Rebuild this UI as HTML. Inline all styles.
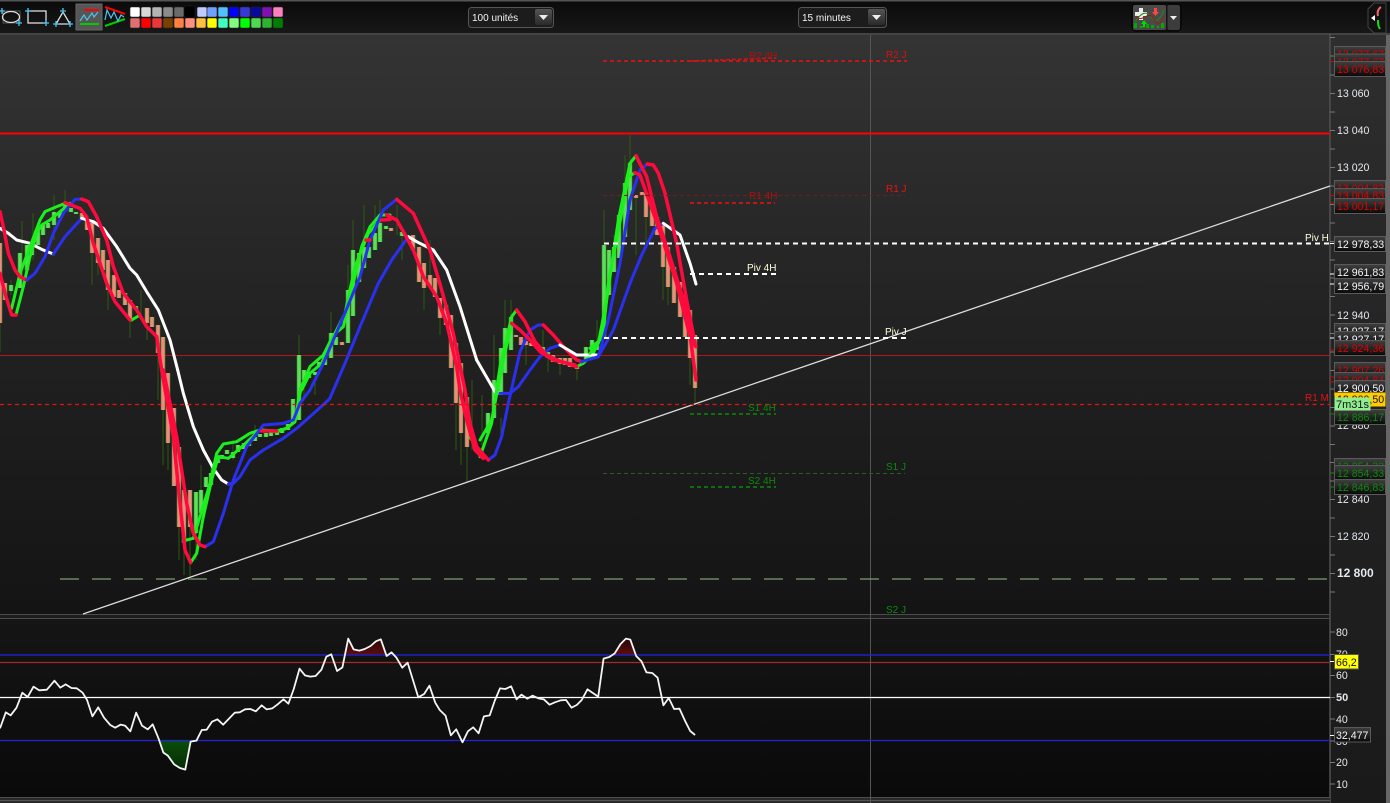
<!DOCTYPE html>
<html><head><meta charset="utf-8"><style>
html,body{margin:0;padding:0;background:#111;width:1390px;height:803px;overflow:hidden}
svg{display:block;font-family:"Liberation Sans",sans-serif}
text{font-size:10.6px}
.ax{fill:#e4e8ee}
.r{fill:#e00000}.g{fill:#0c8a0c}.w{fill:#f2f4f8}
.lb{fill:url(#lbl);stroke:#5a5a5a;stroke-width:1}
.c{fill:none;stroke-linejoin:round;stroke-linecap:round;stroke-width:9}
.R{stroke:#ff0a3c;stroke-width:10.5}.G{stroke:#1cf01c}.B{stroke:#2a30f0}.W{stroke:#fff}
.t{font-size:10px}
</style></head><body>
<svg width="1390" height="803" viewBox="0 0 1390 803" xmlns="http://www.w3.org/2000/svg">
<defs>
<linearGradient id="bg" x1="0" y1="0" x2="0" y2="1"><stop offset="0" stop-color="#343434"/><stop offset=".5" stop-color="#222"/><stop offset="1" stop-color="#141414"/></linearGradient>
<linearGradient id="axb" x1="0" y1="0" x2="0" y2="1"><stop offset="0" stop-color="#2e2e2e"/><stop offset=".5" stop-color="#222"/><stop offset="1" stop-color="#1a1a1a"/></linearGradient>
<linearGradient id="rsi" x1="0" y1="0" x2="0" y2="1"><stop offset="0" stop-color="#151515"/><stop offset="1" stop-color="#0a0a0a"/></linearGradient>
<linearGradient id="top" x1="0" y1="0" x2="0" y2="1"><stop offset="0" stop-color="#0a0a0a"/><stop offset="1" stop-color="#181818"/></linearGradient>
<linearGradient id="lbl" x1="0" y1="0" x2="0" y2="1"><stop offset="0" stop-color="#404040"/><stop offset="1" stop-color="#080808"/></linearGradient>
<linearGradient id="btn" x1="0" y1="0" x2="0" y2="1"><stop offset="0" stop-color="#555"/><stop offset="1" stop-color="#2a2a2a"/></linearGradient>
<linearGradient id="gf" x1="0" y1="0" x2="0" y2="1"><stop offset="0" stop-color="#0a4f0a"/><stop offset="1" stop-color="#062a06"/></linearGradient>
<linearGradient id="rf" x1="0" y1="0" x2="0" y2="1"><stop offset="0" stop-color="#2a0606"/><stop offset="1" stop-color="#5a0e0e"/></linearGradient>
<path id="gb" d="M11 285V291M20 253V288M27 245V270M32 245V255M38 230V245M43 225V235M48 223V228M54 212V225M60 212V218M65 205V208M71 208V212M76 212V214M136 306V310M196 492V533M201 490V513M206 477V487M211 473V485M218 457V463M222 455V459M227 450V454M233 452V458M238 445V452M244 443V449M249 440V446M255 437V441M260 434V437M266 433V437M271 432V436M277 431V435M282 428V433M288 424V430M293 399V424M299 355V420M304 370V380M309 373V378M315 372V375M319 362V367M325 352V365M331 333V358M336 337V345M348 290V343M353 250V316M359 253V282M364 247V268M369 247V258M375 233V250M380 223V242M386 226V229M402 232V236M488 413V433M494 380V418M501 348V395M505 328V373M511 317V350M543 347V352M548 352V358M586 347V360M592 340V353M597 342V350M604 245V337M609 250V295M614 247V272M619 215V258M625 183V237M630 163V210"/>
<path id="rb" d="M0 243V323M5 283V300M82 213V220M87 220V230M92 223V253M98 238V263M103 250V270M108 260V290M114 275V297M119 290V298M125 293V305M130 300V320M147 308V323M152 317V327M158 325V353M163 337V410M168 373V443M174 408V486M179 447V527M184 490V543M190 490V527M342 342V345M391 228V231M413 235V250M419 247V282M424 263V288M430 275V287M435 278V297M440 298V318M446 305V325M451 315V368M456 343V403M461 363V433M467 397V447M516 335V337M521 337V345M526 341V345M531 343V346M553 355V362M560 358V364M565 358V365M570 358V367M577 365V369M636 195V198M642 192V195M646 193V217M652 203V226M657 217V235M663 223V267M668 247V287M674 267V303M680 282V317M685 295V337M690 310V358M695 335V388"/>
</defs>

<!-- backgrounds -->
<rect width="1390" height="803" fill="#1c1c1c"/>
<rect x="0" y="35" width="1330" height="579" fill="url(#bg)"/>
<rect x="1331" y="35" width="55" height="768" fill="url(#axb)"/>
<rect x="1386" y="34" width="4" height="769" fill="#666"/>
<rect x="0" y="619" width="1330" height="178" fill="url(#rsi)"/>
<rect width="1390" height="34" fill="url(#top)"/>
<rect width="1390" height="1.5" fill="#555"/>
<rect y="33" width="1390" height="2" fill="#444"/>
<path d="M1330 34V803" stroke="#555" stroke-width="1.4" fill="none"/>
<path d="M0 614.5H1330M0 618.5H1330M0 797.5H1330" stroke="#4c4c4c" fill="none"/>
<rect y="798" width="1330" height="5" fill="#2a2a2a"/><path d="M0 800.5H1330" stroke="#555"/>

<!-- toolbar icons -->
<g fill="none">
<rect x="3" y="11" width="17" height="12" stroke="#555"/><ellipse cx="11" cy="17" rx="8.5" ry="5.5" stroke="#ddd" stroke-width="1.3"/>
<path d="M2 8V14M-1 11H5M19 20V26M16 23H22" stroke="#4cc4f0" stroke-width="1.3"/>
<rect x="28" y="11" width="18" height="12" stroke="#ddd" stroke-width="1.3"/>
<path d="M28 8V14M25 11H31M46 20V26M43 23H49" stroke="#4cc4f0" stroke-width="1.3"/>
<path d="M63 12L56 24H70Z" stroke="#ddd" stroke-width="1.3"/>
<path d="M63 8V14M60 11H66M56 21V27M53 24H59M70 21V27M67 24H73" stroke="#4cc4f0" stroke-width="1.3"/>
<rect x="76" y="4" width="26" height="26" fill="#565656" stroke="#666"/>
<path d="M84 10H99" stroke="#f00" stroke-width="2"/><path d="M80 24H99" stroke="#0c0" stroke-width="2"/>
<path d="M80 21L84 15L87 20L92 13L94 17L98 12" stroke="#4cc4f0" stroke-width="1.2"/>
<path d="M105 7L125 14" stroke="#f00" stroke-width="2"/><path d="M105 26L125 19" stroke="#0c0" stroke-width="2"/>
<path d="M105 20L107 10L111 18L114 12L118 21L121 15L124 17" stroke="#4cc4f0" stroke-width="1.2"/>
</g>
<!-- swatches -->
<g stroke="#222" stroke-width=".6">
<rect x="130" y="7" width="10" height="10" rx="1.5" fill="#fff"/><rect x="141" y="7" width="10" height="10" rx="1.5" fill="#d8d8d8"/><rect x="152" y="7" width="10" height="10" rx="1.5" fill="#b4b4b4"/><rect x="163" y="7" width="10" height="10" rx="1.5" fill="#8c8c8c"/><rect x="174" y="7" width="10" height="10" rx="1.5" fill="#6a6a6a"/><rect x="184" y="6" width="11" height="12" rx="1.5" fill="#000"/><rect x="197" y="7" width="10" height="10" rx="1.5" fill="#c0ccff"/><rect x="207" y="7" width="10" height="10" rx="1.5" fill="#70a0ff"/><rect x="218" y="7" width="10" height="10" rx="1.5" fill="#50c0ff"/><rect x="229" y="7" width="10" height="10" rx="1.5" fill="#0000ff"/><rect x="240" y="7" width="10" height="10" rx="1.5" fill="#3838d8"/><rect x="251" y="7" width="10" height="10" rx="1.5" fill="#0808a0"/><rect x="262" y="7" width="10" height="10" rx="1.5" fill="#8010b0"/><rect x="273" y="7" width="10" height="10" rx="1.5" fill="#ff80c0"/>
<rect x="130" y="18" width="10" height="10" rx="1.5" fill="#e07070"/><rect x="141" y="18" width="10" height="10" rx="1.5" fill="#f00"/><rect x="152" y="18" width="10" height="10" rx="1.5" fill="#e83838"/><rect x="163" y="18" width="10" height="10" rx="1.5" fill="#7a4000"/><rect x="174" y="18" width="10" height="10" rx="1.5" fill="#ff8040"/><rect x="185" y="18" width="10" height="10" rx="1.5" fill="#ff9080"/><rect x="196" y="18" width="10" height="10" rx="1.5" fill="#ffc040"/><rect x="207" y="18" width="10" height="10" rx="1.5" fill="#ff0"/><rect x="218" y="18" width="10" height="10" rx="1.5" fill="#40ffc0"/><rect x="229" y="18" width="10" height="10" rx="1.5" fill="#80ff80"/><rect x="240" y="18" width="10" height="10" rx="1.5" fill="#0f0"/><rect x="251" y="18" width="10" height="10" rx="1.5" fill="#50d850"/><rect x="262" y="18" width="10" height="10" rx="1.5" fill="#30b030"/><rect x="273" y="18" width="10" height="10" rx="1.5" fill="#008000"/>
</g>
<!-- dropdowns -->
<rect x="468.500" y="7.500" width="85" height="20" rx="3" fill="#1c1c1c" stroke="#555"/>
<rect x="535" y="9" width="17" height="16" rx="2" fill="url(#btn)"/><path d="M539 15H548L543.500 20Z" fill="#eee"/>
<text x="472" y="21" class="w" style="font-size:10px">100 unités</text>
<rect x="798.500" y="7.500" width="88" height="20" rx="3" fill="#1c1c1c" stroke="#555"/>
<rect x="868" y="9" width="17" height="16" rx="2" fill="url(#btn)"/><path d="M872 15H881L876.500 20Z" fill="#eee"/>
<text x="802" y="21" class="w" style="font-size:10px">15 minutes</text>
<!-- right tool button -->
<rect x="1132" y="4" width="49" height="27" rx="4" fill="#151515" stroke="#000"/>
<rect x="1133" y="5" width="33" height="25" rx="2" fill="#4a4a4a"/><rect x="1167.500" y="5" width="12.500" height="25" rx="2" fill="#3c3c3c"/>
<path d="M1170 16H1177L1173.500 20Z" fill="#eee"/>
<path d="M1139 8H1143V12H1147V16H1143V20H1139V16H1135V12H1139Z" fill="#eee"/>
<path d="M1154 8h3v4h2l-3.500 4l-3.500-4h2Z" fill="#f44"/><path d="M1144 20l3 4h-2v3h-2v-3h-2Z" fill="#0d0"/>
<path d="M1135 22C1140 14 1146 10 1150 16S1158 24 1164 10" fill="none" stroke="#1a8a1a"/><path d="M1136 16C1142 24 1148 10 1153 18S1160 26 1164 16" fill="none" stroke="#a01818"/>
<path d="M1134 28v-5h3v5zM1140 28v-2h3v2zM1146 28v-4h3v4zM1151 28v-3h3v3zM1157 28v-2h2v2zM1161 28v-5h3v5z" fill="#0a0"/>
<!-- hexagon top right -->
<path d="M1374 3H1386V33H1374L1368 27V9Z" fill="#111" stroke="#444"/>
<path d="M1371 18l4-3v6Z" fill="#fff"/><path d="M1381 7c-3 2-4 5-3 9" fill="none" stroke="#e66" stroke-width="2"/><path d="M1378 20c0 4 0 6 2 9" fill="none" stroke="#1d1" stroke-width="2"/>

<!-- crosshair & horizontal lines -->
<path d="M870.500 35V803" stroke="#555" fill="none"/>
<path d="M0 355.500H1330" stroke="#b01818" fill="none"/>
<path d="M60 579H1330" stroke="#7f9f78" stroke-width="1.2" stroke-dasharray="19 13" fill="none"/>
<path d="M0 133.500H1330" stroke="#ff0000" stroke-width="2" fill="none"/>

<!-- candles -->
<path d="M0 323V352M11 280V295M22 221V290M33 213V260M54 195V240M65 190V212M92 253V285M98 263V275M108 290V310M130 320V338M141 290V320M147 323V340M158 353V400M163 410V465M168 443V470M179 527V560M184 543V575M190 527V580M196 533V560M201 465V490M211 465V473M233 440V460M255 425V437M299 335V355M304 380V400M315 375V395M331 312V333M348 265V290M353 220V250M364 205V247M375 205V233M380 200V223M397 205V235M402 232V260M424 288V310M430 240V275M440 318V335M467 447V482M461 433V465M456 403V450M472 380V450M482 395V445M494 335V380M501 418V440M505 328V300M511 300V317M526 345V365M543 330V347M548 358V372M560 364V375M577 369V380M597 320V340M604 210V245M614 235V247M625 155V183M630 135V163M636 198V255M646 217V245M663 267V300M668 287V305M695 388V405M690 358V385" stroke="#2d5a12" fill="none"/>
<g fill="none" stroke-width="4.600" stroke="#3f8a2c"><use href="#gb"/><use href="#rb"/></g>
<g fill="none" stroke-width="3.400"><use href="#gb" stroke="#5ce05c"/><use href="#rb" stroke="#f08a7c"/></g>

<!-- MA curves -->
<g transform="translate(0,180) scale(.33333)">
<polyline class="c W" points="0,145 25,160 50,180 90,190 125,208 160,222"/>
<polyline class="c B" points="160,222 195,170 245,115"/>
<polyline class="c W" points="245,115 280,125 310,145 350,200 390,265 410,285 440,335 475,390 510,480 533,570"/>
<polyline class="c G" points="48,405 70,320 90,230 110,160 125,135 150,120 180,95 210,70"/>
<polyline class="c G" points="35,385 60,280 90,200 120,120 135,95 165,82 195,70"/>
<polyline class="c G" points="395,420 420,405"/>
<polyline class="c R" points="0,95 12,150 25,220 45,270 60,290 80,300"/>
<polyline class="c B" points="80,300 105,280 135,230 160,160 190,100 225,58 245,57"/>
<polyline class="c R" points="245,57 265,65 290,110 320,180 340,260 370,340 410,390 440,440 470,470 485,570"/>
<polyline class="c R" points="0,280 15,340 35,405 48,405"/>
<polyline class="c R" points="195,68 240,85 260,110 280,190 320,310 345,365 390,420"/>
</g>
<g transform="translate(150,370) scale(.33333)">
<polyline class="c W" points="83,0 100,70 130,170 160,240 190,295 215,330 235,342"/>
<polyline class="c B" points="235,342 250,340 270,320 300,270 340,240 400,205 440,175 480,140 530,95 540,85"/>
<polyline class="c G" points="122,578 140,550 160,440 185,330 205,260 235,265 270,235 330,180 380,183 410,175 435,155 452,60"/>
<polyline class="c G" points="110,510 130,505 150,440 180,340 200,250 220,222 260,215 300,190 330,180 380,185 410,175 435,155 450,60"/>
<polyline class="c B" points="165,530 190,515 220,430 250,330 290,230 340,165 400,160 430,150 450,100 480,60"/>
<polyline class="c R" points="35,0 70,200 90,400 105,540 122,578"/>
<polyline class="c R" points="40,0 80,200 110,400 130,490 150,525 165,530"/>
<polyline class="c R" points="335,183 380,183"/>
</g>
<g transform="translate(290,190) scale(.33333)">
<polyline class="c G" points="30,600 60,530 100,495 130,435 160,410 185,300 215,170 240,110 270,75 300,75"/>
<polyline class="c G" points="35,600 60,550 95,520 125,450 165,370 195,230 235,130 270,90"/>
<polyline class="c B" points="60,600 100,520 160,380 210,260 240,150 280,60 320,28"/>
<polyline class="c B" points="120,624 165,520 210,410 265,280 305,210 330,175 355,140"/>
<polyline class="c W" points="355,140 380,155 430,180 470,240 510,350 560,510"/>
<polyline class="c R" points="320,28 370,70 420,180 455,300 490,430 525,600"/>
<polyline class="c R" points="290,75 320,90 340,125 370,180 400,260 440,320 470,400 500,530 510,600"/>
<polyline class="c R" points="275,90 300,88"/><polyline class="c R" points="228,150 240,150"/>
</g>
<g transform="translate(450,300) scale(.33333)">
<polyline class="c W" points="80,180 135,275 150,280"/>
<polyline class="c G" points="90,470 125,370 150,200 185,50 200,30"/>
<polyline class="c G" points="90,420 125,360 160,180 185,70"/>
<polyline class="c G" points="60,412 80,440"/>
<polyline class="c G" points="380,200 400,190 430,160 460,90 470,0"/>
<polyline class="c B" points="150,280 180,280 205,260 240,210 270,170 300,145 330,135"/>
<polyline class="c B" points="115,480 135,465 155,410 175,310 210,155 240,90 265,75 280,75"/>
<polyline class="c R" points="30,270 50,360 75,450 100,475"/>
<polyline class="c R" points="45,270 60,370 80,440 115,480"/>
<polyline class="c R" points="200,30 225,65 255,125 290,165 320,180 380,200"/>
<polyline class="c R" points="185,70 210,90 240,120 270,155 310,180 375,195"/>
<polyline class="c R" points="280,75 310,105 340,140 380,180 395,185"/>
<polyline class="c W" points="330,135 380,165 440,165"/>
<polyline class="c B" points="395,185 445,170"/>
</g>
<g transform="translate(590,140) scale(.33333)">
<polyline class="c G" points="0,640 25,610 50,480 85,240 120,70 138,47"/>
<polyline class="c G" points="0,625 30,600 60,400 95,220 115,110 135,98"/>
<polyline class="c B" points="25,650 70,570 120,430 155,345 195,265 220,250"/>
<polyline class="c B" points="25,650 55,540 90,370 120,180 150,90 172,72"/>
<polyline class="c W" points="220,250 270,285 300,370 318,432"/>
<polyline class="c R" points="172,72 190,75 205,100 225,160 260,310 290,480 315,610"/>
<polyline class="c R" points="138,47 170,110 200,230 240,350 290,510 318,720"/>
<polyline class="c R" points="135,98 150,105 180,190 215,290 260,430 300,590 318,620"/>
</g>

<!-- trend line -->
<path d="M83 614L1330 186" stroke="#ddd" stroke-width="1.3" fill="none"/>

<!-- pivots -->
<g fill="none">
<path d="M603 61H907" stroke="#f01010" stroke-width="1.500" stroke-dasharray="4 3"/>
<path d="M690 61L776 58" stroke="#d81010" stroke-width="1.500" stroke-dasharray="4 2"/>
<path d="M603 195.500H905" stroke="#6a2020" stroke-dasharray="4 3"/>
<path d="M690 203H775" stroke="#f01010" stroke-width="1.500" stroke-dasharray="4 3"/>
<path d="M604 243.500H1330" stroke="#fff" stroke-width="2" stroke-dasharray="5 4"/>
<path d="M690 274H776" stroke="#fff" stroke-width="2" stroke-dasharray="5 4"/>
<path d="M604 338H907" stroke="#fff" stroke-width="2" stroke-dasharray="5 4"/>
<path d="M0 404.500H1330" stroke="#e81010" stroke-width="1.200" stroke-dasharray="4 3.500"/>
<path d="M690 414H776" stroke="#0a8a0a" stroke-width="1.500" stroke-dasharray="4 3"/>
<path d="M603 473.500H905" stroke="#2a5a2a" stroke-dasharray="4 3"/>
<path d="M690 487H776" stroke="#0a8a0a" stroke-width="1.500" stroke-dasharray="4 3"/>
</g>
<text x="749" y="59" class="t" fill="#b01010">R2 4H</text>
<text x="886" y="58" class="t" fill="#d81010">R2 J</text>
<text x="749" y="199" class="t" fill="#b01010">R1 4H</text>
<text x="886" y="192" class="t" fill="#f01010">R1 J</text>
<text x="747" y="271" class="t" fill="#ffffd8">Piv 4H</text>
<text x="1305" y="241" class="t" fill="#ffffe0">Piv H</text>
<text x="885" y="335" class="t" fill="#ffffe0">Piv J</text>
<text x="1305" y="401" class="t" fill="#e81010">R1 M</text>
<text x="748" y="411" class="t" fill="#0a8a0a">S1 4H</text>
<text x="886" y="470" class="t" fill="#0a8a0a">S1 J</text>
<text x="748" y="484" class="t" fill="#0a8a0a">S2 4H</text>
<text x="886" y="613" class="t" fill="#0a8a0a">S2 J</text>

<!-- axis ticks -->
<path d="M1330 37.500h5M1330 56h5M1330 75h5M1330 93.500h5M1330 112h5M1330 130.500h5M1330 149h5M1330 167.500h5M1330 186h5M1330 204.500h5M1330 223h5M1330 241.500h5M1330 260h5M1330 278h5M1330 296.500h5M1330 315h5M1330 333.500h5M1330 352h5M1330 370.500h5M1330 389h5M1330 407.500h5M1330 426h5M1330 444.500h5M1330 462.500h5M1330 481h5M1330 499.500h5M1330 518h5M1330 536.500h5M1330 555h5M1330 573.500h5M1330 592h5M1330 632h5M1330 654.500h5M1330 675.500h5M1330 697.500h5M1330 719h5M1330 741h5M1330 762.500h5M1330 784h5" stroke="#777" fill="none"/>
<path d="M1330 61.500h5M1330 195.500h5M1330 203h5M1330 350h5M1330 377h5M1330 382h5" stroke="#e00000" fill="none"/>
<path d="M1330 243.500h5M1330 274h5M1330 284h5M1330 338h5M1330 661.500h5M1330 735.500h5" stroke="#fff" fill="none"/>
<path d="M1330 414h5M1330 473h5M1330 487h5" stroke="#0a8a0a" fill="none"/>
<text x="1337" y="97" class="ax">13 060</text>
<text x="1337" y="134" class="ax">13 040</text>
<text x="1337" y="171" class="ax">13 020</text>
<text x="1337" y="319" class="ax">12 940</text>
<text x="1337" y="429" class="ax">12 880</text>
<text x="1337" y="503" class="ax">12 840</text>
<text x="1337" y="540" class="ax">12 820</text>
<text x="1337" y="577" class="ax" style="font-size:12px;font-weight:bold">12 800</text>

<!-- price boxes -->
<g>
<rect class="lb" x="1334.500" y="46.500" width="51" height="15"/><text x="1337" y="58" class="r">13 077,67</text>
<rect class="lb" x="1334.500" y="54" width="51" height="15"/><text x="1337" y="66" class="r">13 077,67</text>
<rect class="lb" x="1334.500" y="61.500" width="51" height="15"/><text x="1337" y="73" class="r">13 076,83</text>
<rect class="lb" x="1334.500" y="180.500" width="51" height="15"/><text x="1337" y="192" class="r">13 004,83</text>
<rect class="lb" x="1334.500" y="188.500" width="51" height="15"/><text x="1337" y="199" class="r">13 004,83</text>
<rect class="lb" x="1334.500" y="198.500" width="51" height="15"/><text x="1337" y="210" class="r">13 001,17</text>
<rect class="lb" x="1334.500" y="236.500" width="51" height="15"/><text x="1337" y="248" class="w">12 978,33</text>
<rect class="lb" x="1334.500" y="264.500" width="51" height="15"/><text x="1337" y="276" class="w">12 961,83</text>
<rect class="lb" x="1334.500" y="278.500" width="51" height="15"/><text x="1337" y="290" class="w">12 956,79</text>
<rect class="lb" x="1334.500" y="323.500" width="51" height="15"/><text x="1337" y="335" class="w">12 927,17</text>
<rect class="lb" x="1334.500" y="331.500" width="51" height="15"/><text x="1337" y="343" class="w">12 927,17</text>
<rect class="lb" x="1334.500" y="340.500" width="51" height="15"/><text x="1337" y="352" class="r">12 924,36</text>
<rect class="lb" x="1334.500" y="362.500" width="51" height="15"/><text x="1337" y="374" class="r">12 907,26</text>
<rect class="lb" x="1334.500" y="372.500" width="51" height="15"/><text x="1337" y="384" class="r">12 904,84</text>
<rect class="lb" x="1334.500" y="380.500" width="51" height="15"/><text x="1337" y="392" class="w">12 900,50</text>
<rect x="1334.500" y="392.500" width="51" height="14" fill="#ffcc00"/><text x="1337" y="403" fill="#111">12 900,50</text>
<rect class="lb" x="1334.500" y="409.500" width="51" height="15"/><text x="1337" y="421" class="g">12 886,17</text>
<rect x="1334.500" y="397.500" width="36" height="13" fill="#90ee90"/><text x="1336" y="408" fill="#111" style="font-size:11px">7m31s</text>
<rect class="lb" x="1334.500" y="458.500" width="51" height="15"/><text x="1337" y="470" class="g">12 854,33</text>
<rect class="lb" x="1334.500" y="465.500" width="51" height="15"/><text x="1337" y="477" class="g">12 854,33</text>
<rect class="lb" x="1334.500" y="479.500" width="51" height="15"/><text x="1337" y="491" class="g">12 846,83</text>
</g>

<!-- RSI -->
<g transform="translate(0,620) scale(.44643,.33333)">
<polygon fill="url(#gf)" points="358,362 366,398 376,407 390,433 403,444 415,449 427,362"/>
<polygon fill="url(#rf)" points="775,103 780,56 792,88 805,92 817,87 830,78 842,64 853,58 866,103"/>
<polygon fill="url(#rf)" points="1377,103 1390,72 1402,56 1412,59 1425,103"/>
</g>
<path d="M0 655H1330M0 740.500H1330" stroke="#2222e0" stroke-width="1.300" fill="none"/>
<path d="M0 662.500H1330" stroke="#a82828" stroke-width="1.200" fill="none"/>
<path d="M0 697.500H1330" stroke="#fff" stroke-width="1.200" fill="none"/>
<g transform="translate(0,620) scale(.44643,.33333)">
<polyline fill="none" stroke="#f4f4f4" stroke-width="1.800" vector-effect="non-scaling-stroke" style="vector-effect:non-scaling-stroke" stroke-linejoin="round" points="0,325 13,277 24,286 37,263 50,218 62,231 75,200 88,211 105,209 122,182 135,203 147,193 160,204 172,205 185,218 195,240 207,289 220,262 233,293 247,315 258,323 270,314 280,317 292,334 305,278 318,317 331,328 342,313 355,355 366,398 376,407 390,433 403,444 415,449 427,365 440,362 452,330 463,329 475,305 487,298 500,314 513,296 526,278 537,277 549,268 561,267 573,274 586,256 597,268 610,265 622,253 635,238 646,251 658,207 671,146 683,166 695,170 707,168 720,149 731,110 742,103 755,153 767,142 780,56 792,88 805,92 817,87 830,78 842,64 853,58 866,108 877,97 888,113 901,143 913,128 925,180 937,232 950,222 962,197 975,248 985,270 998,287 1010,346 1022,328 1036,367 1048,334 1060,322 1072,340 1084,289 1097,286 1108,243 1120,205 1132,207 1145,199 1157,238 1168,224 1181,236 1193,227 1206,235 1218,238 1231,254 1243,247 1256,241 1268,240 1280,263 1292,255 1303,240 1316,208 1340,230 1352,116 1365,111 1377,100 1390,72 1402,56 1412,59 1425,108 1437,124 1448,157 1461,159 1473,173 1486,256 1498,234 1510,267 1522,266 1535,304 1546,333 1557,345"/>
</g>
<text x="1336" y="636" class="ax">80</text>
<text x="1336" y="658" class="ax">70</text>
<text x="1336" y="679" class="ax">60</text>
<text x="1336" y="701" class="ax" style="font-size:11px;font-weight:bold">50</text>
<text x="1336" y="723" class="ax">40</text>
<text x="1336" y="745" class="ax">30</text>
<text x="1336" y="766" class="ax">20</text>
<text x="1336" y="788" class="ax">10</text>
<rect x="1334.500" y="654.500" width="24" height="14.500" fill="#ffff00" stroke="#555"/><text x="1336" y="666" fill="#111">66,2</text>
<rect class="lb" x="1334.500" y="727.500" width="36" height="14.500"/><text x="1336" y="739" class="w">32,477</text>
</svg>
</body></html>
